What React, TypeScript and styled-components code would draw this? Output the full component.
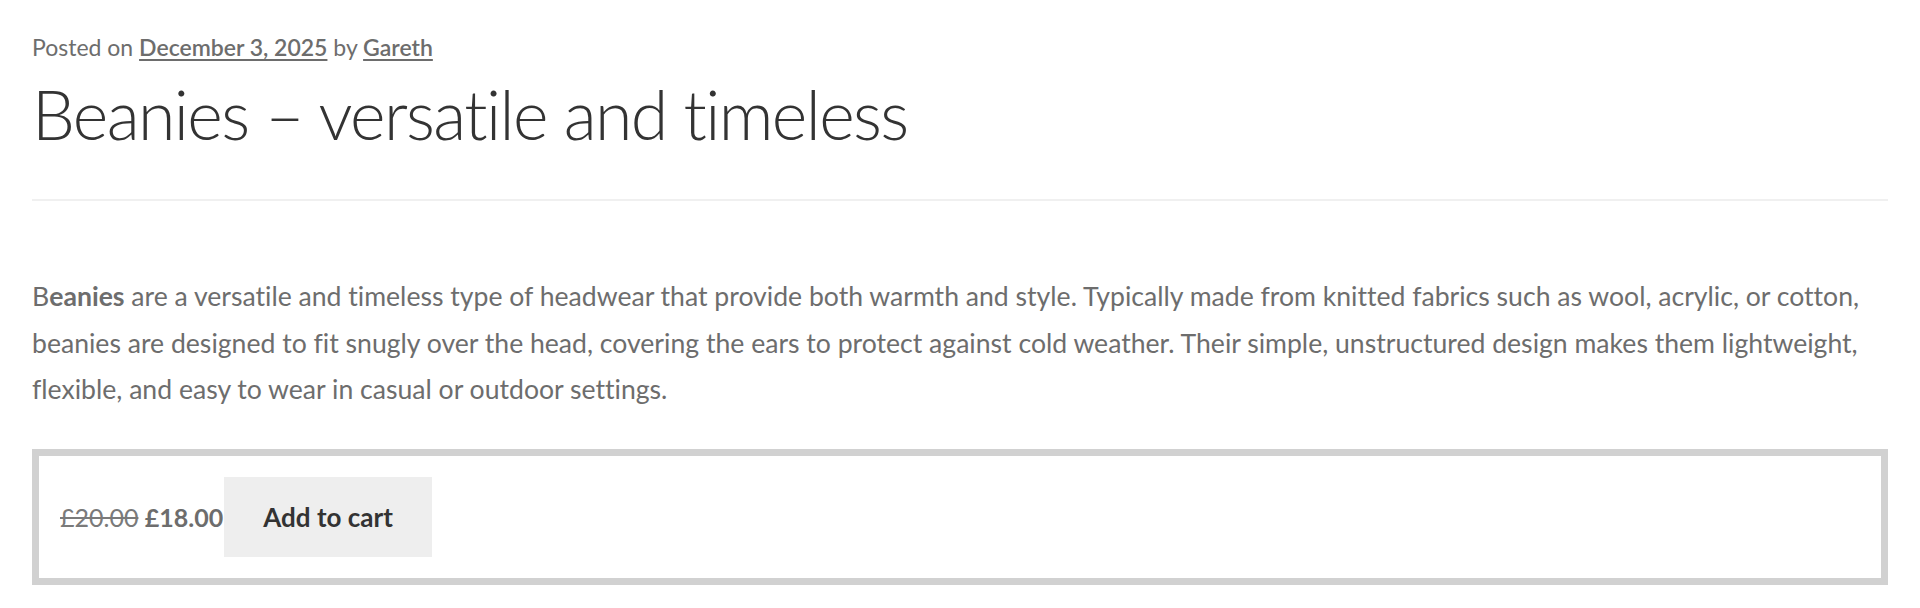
import { createGlobalStyle, styled } from "styled-components";

const GlobalStyle = createGlobalStyle`
  html, body {
    margin: 0;
    padding: 0;
    background: #ffffff;
  }
  body {
    font-family: Lato, "Open Sans", sans-serif;
    font-variant-ligatures: none;
    color: #6d6d6d;
    -webkit-font-smoothing: antialiased;
  }
`;

const App = () => {
  return (
    <>
      <GlobalStyle />
      <StArticle>
        <StHeader>
          <StMeta>
            Posted on <StMetaLink href="#">December 3, 2025</StMetaLink> by{" "}
            <StMetaLink href="#">Gareth</StMetaLink>
          </StMeta>
          <StTitle>Beanies – versatile and timeless</StTitle>
        </StHeader>

        <StContent>
          <StParagraph>
            B<strong>eanies</strong> are a versatile and timeless type of headwear that provide both
            warmth and style. Typically made from knitted fabrics such as wool, acrylic, or cotton,
            beanies are designed to fit snugly over the head, covering the ears to protect against
            cold weather. Their simple, unstructured design makes them lightweight, flexible, and
            easy to wear in casual or outdoor settings.
          </StParagraph>

          <StProductBox>
            <StPrice>
              <StOldPrice>£20.00</StOldPrice> <StNewPrice>£18.00</StNewPrice>
            </StPrice>
            <StCartBtn type="button">Add to cart</StCartBtn>
          </StProductBox>
        </StContent>
      </StArticle>
    </>
  );
};

export default App;

const StArticle = styled.article`
  padding: 29px 32px 0;
`;

const StHeader = styled.header`
  border-bottom: 2px solid #f0f0f0;
  padding-bottom: 43px;
`;

const StMeta = styled.div`
  font-size: 23px;
  line-height: 36px;
  color: #6d6d6d;
`;

const StMetaLink = styled.a`
  color: #6d6d6d;
  font-weight: 600;
  text-decoration: underline;
  text-underline-offset: 3px;
`;

const StTitle = styled.h1`
  margin: 7px 0 0;
  font-size: 68px;
  line-height: 84px;
  font-weight: 300;
  color: #333333;
  letter-spacing: -1.6px;
`;

const StContent = styled.div`
  padding-top: 72px;
`;

const StParagraph = styled.p`
  margin: 0 0 36px;
  font-size: 26.6px;
  line-height: 46.5px;

  strong {
    font-weight: 700;
  }
`;

const StProductBox = styled.div`
  display: flex;
  align-items: center;
  border: 7px solid #d1d1d1;
  padding: 21px;
`;

const StPrice = styled.span`
  font-size: 25px;
  margin-right: 1px;
  white-space: nowrap;
`;

const StOldPrice = styled.del`
  color: #7a7a7a;
`;

const StNewPrice = styled.ins`
  text-decoration: none;
  font-weight: 700;
`;

const StCartBtn = styled.button`
  height: 80px;
  padding: 0 39px;
  border: 0;
  background-color: #eeeeee;
  color: #333333;
  font-family: Lato, "Open Sans", sans-serif;
  font-size: 26px;
  font-weight: 700;
  cursor: pointer;
`;
